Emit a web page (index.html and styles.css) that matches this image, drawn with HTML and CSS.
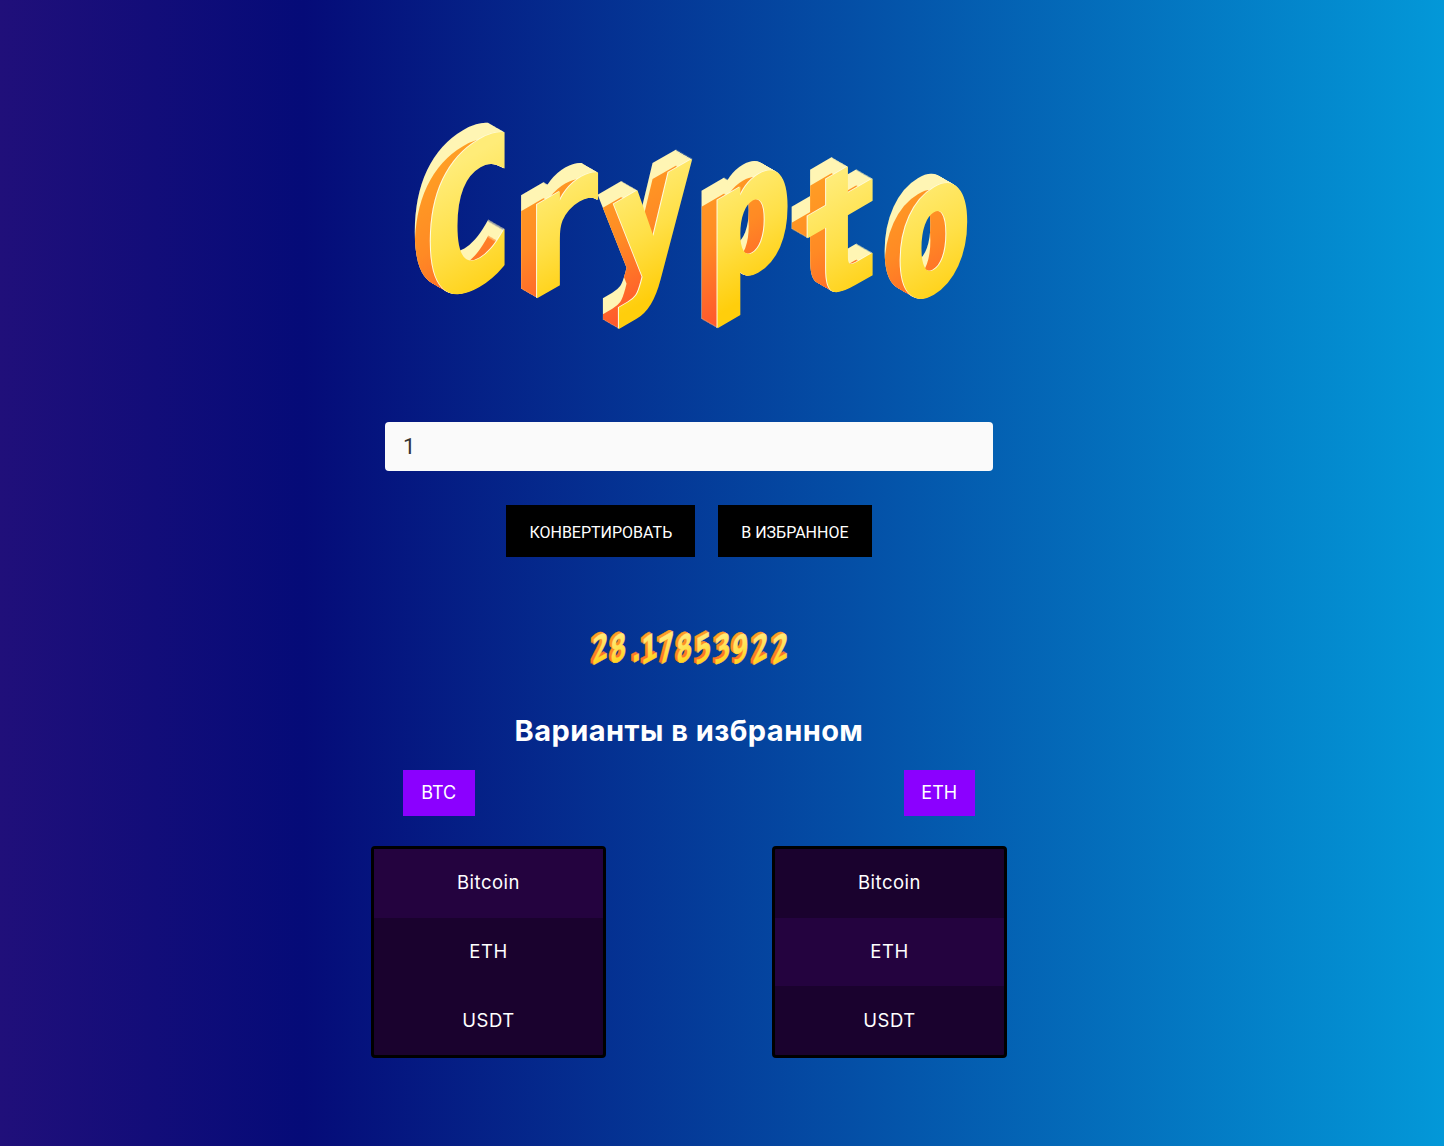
FILE: index.html
```html
<!DOCTYPE html>
<html lang="ru">
<head>
<meta charset="utf-8">
<title>Crypto</title>
<link rel="stylesheet" href="styles.css">
</head>
<body>
<main class="app">
  <h1 class="logo">
    <svg class="logo-svg" width="636" height="240" viewBox="0 0 636 240" aria-label="Crypto">
      <defs>
        <linearGradient id="face" x1="0" y1="0.2" x2="0" y2="0.92">
          <stop offset="0" stop-color="#ffec78"/>
          <stop offset="0.5" stop-color="#ffe048"/>
          <stop offset="1" stop-color="#ffce0c"/>
        </linearGradient>
        <linearGradient id="side" x1="0" y1="0.12" x2="0" y2="0.95">
          <stop offset="0" stop-color="#ffa024"/>
          <stop offset="0.5" stop-color="#ff8a24"/>
          <stop offset="1" stop-color="#ff5a2c"/>
        </linearGradient>
        <g id="e2"><use href="#word" transform="translate(-1 -.577)"/><use href="#word" transform="translate(-2 -1.155)"/></g>
        <g id="e4"><use href="#e2"/><use href="#e2" transform="translate(-2 -1.155)"/></g>
        <g id="e8"><use href="#e4"/><use href="#e4" transform="translate(-4 -2.31)"/></g>
        <g id="e16"><use href="#e8"/><use href="#e8" transform="translate(-8 -4.62)"/></g>
        <mask id="sweep" maskUnits="userSpaceOnUse" x="0" y="0" width="636" height="240">
          <g fill="#fff" stroke="#fff"><use href="#e16"/></g>
        </mask>
      </defs>
      <g fill="#fff5b4" stroke="#fff5b4"><use href="#e16"/></g>
      <g mask="url(#sweep)"><g fill="url(#side)" stroke="url(#side)" transform="translate(0 16)"><use href="#e16"/></g></g>
      <g fill="#fffbe0" stroke="#fffbe0"><use href="#word" transform="translate(-1 -.3)"/></g>
      <g fill="url(#face)" stroke="url(#face)">
        <g id="word" class="logo-word"><text transform="matrix(1.55 -.895 0 1.9 50 216)">C</text><text transform="matrix(1.38 -.797 0 1.65 148 207)">r</text><text transform="matrix(1.36 -.785 0 1.65 241 197)">y</text><text transform="matrix(1.38 -.797 0 1.65 338 197)">p</text><text transform="matrix(1.32 -.762 0 1.7 431 214)">t</text><text transform="matrix(1.26 -.727 0 1.8 525 212)">o</text></g>
      </g>
    </svg>
  </h1>

  <input class="amount" type="text" value="1">

  <div class="actions">
    <button class="btn">Конвертировать</button>
    <button class="btn">В избранное</button>
  </div>

  <div class="result">
    <svg class="result-svg" width="636" height="44" viewBox="0 0 636 44" aria-label="28.17853922">
      <defs>
        <g id="n2"><use href="#num" transform="translate(-1 -.6)"/><use href="#num" transform="translate(-2 -1.2)"/></g>
        <g id="n3"><use href="#n2"/><use href="#num" transform="translate(-3 -1.8)"/></g>
      </defs>
      <g fill="url(#side)" stroke="url(#side)"><use href="#n3"/></g>
      <g fill="url(#face)" stroke="url(#face)">
        <g id="num" class="num-word"><text transform="matrix(.28 -.16 0 .36 221 36)">2</text><text transform="matrix(.28 -.16 0 .36 239 36)">8</text><text transform="matrix(.28 -.16 0 .36 257 36)">.</text><text transform="matrix(.28 -.16 0 .36 270 36)">1</text><text transform="matrix(.28 -.16 0 .36 287 36)">7</text><text transform="matrix(.28 -.16 0 .36 305 36)">8</text><text transform="matrix(.28 -.16 0 .36 324 36)">5</text><text transform="matrix(.28 -.16 0 .36 343 36)">3</text><text transform="matrix(.28 -.16 0 .36 361 36)">9</text><text transform="matrix(.28 -.16 0 .36 381 36)">2</text><text transform="matrix(.28 -.16 0 .36 401 36)">2</text></g>
      </g>
    </svg>
  </div>

  <h2 class="fav-title">Варианты в избранном</h2>

  <div class="fav-row">
    <button class="fav">BTC</button>
    <button class="fav">ETH</button>
  </div>

  <div class="lists">
    <ul class="list">
      <li class="item active">Bitcoin</li>
      <li class="item">ETH</li>
      <li class="item">USDT</li>
    </ul>
    <ul class="list">
      <li class="item">Bitcoin</li>
      <li class="item active">ETH</li>
      <li class="item">USDT</li>
    </ul>
  </div>
</main>
</body>
</html>
```
FILE: styles.css
```css
* { box-sizing: border-box; }
html, body { margin: 0; }
body {
  height: 1146px;
  overflow: hidden;
  background: linear-gradient(90deg, #200f7a 0%, #050b78 21%, #0398d8 100%);
  font-family: "Inter", "Liberation Sans", sans-serif;
  color: #fff;
}
.app {
  width: 636px;
  margin-left: 371px;
  padding-top: 100px;
  display: flex;
  flex-direction: column;
  align-items: center;
}
.logo { margin: 0 0 82px; height: 240px; line-height: 0; }
.logo-svg, .result-svg { display: block; }
.logo-word text, .num-word text {
  font-family: "DejaVu Sans Mono", monospace;
  font-size: 100px;
}
.logo-word text { stroke-width: 2.2px; }
.num-word text { font-weight: 700; stroke-width: 1px; }
.amount {
  width: 608px;
  height: 49px;
  border: 0;
  border-radius: 4px;
  background: #fafafa;
  padding: 0 18px;
  font-family: "Roboto", "Liberation Sans", sans-serif;
  font-size: 22px;
  color: #333;
  outline: none;
}
.actions {
  display: flex;
  gap: 23px;
  margin-top: 34px;
}
.btn {
  height: 52px;
  padding: 2px 23px 0;
  border: 0;
  background: #000;
  color: #fff;
  font-family: "Roboto", "Liberation Sans", sans-serif;
  font-size: 16px;
  text-transform: uppercase;
}
.result { margin-top: 73px; height: 44px; }
.fav-title {
  margin: 40px 0 0;
  font-size: 29px;
  line-height: 34px;
  letter-spacing: .45px;
  font-weight: 700;
  color: #fff;
  text-align: center;
}
.fav-row {
  width: 100%;
  display: flex;
  justify-content: space-between;
  padding: 0 32px;
  margin-top: 22px;
}
.fav {
  height: 46px;
  width: 71.5px;
  padding: 0 0 2px;
  border: 0;
  background: #8b00ff;
  color: #fff;
  font-family: inherit;
  font-size: 18px;
}
.lists {
  width: 100%;
  display: flex;
  justify-content: space-between;
  margin-top: 30px;
}
.list {
  width: 235px;
  margin: 0;
  padding: 0;
  list-style: none;
  border: 3px solid #000;
  border-radius: 4px;
  background: #1a022e;
}
.item {
  height: 68.67px;
  padding-bottom: 2px;
  display: flex;
  align-items: center;
  justify-content: center;
  font-size: 18.5px;
  letter-spacing: .5px;
  color: #fff;
}
.item.active { background: #24033f; }
```
